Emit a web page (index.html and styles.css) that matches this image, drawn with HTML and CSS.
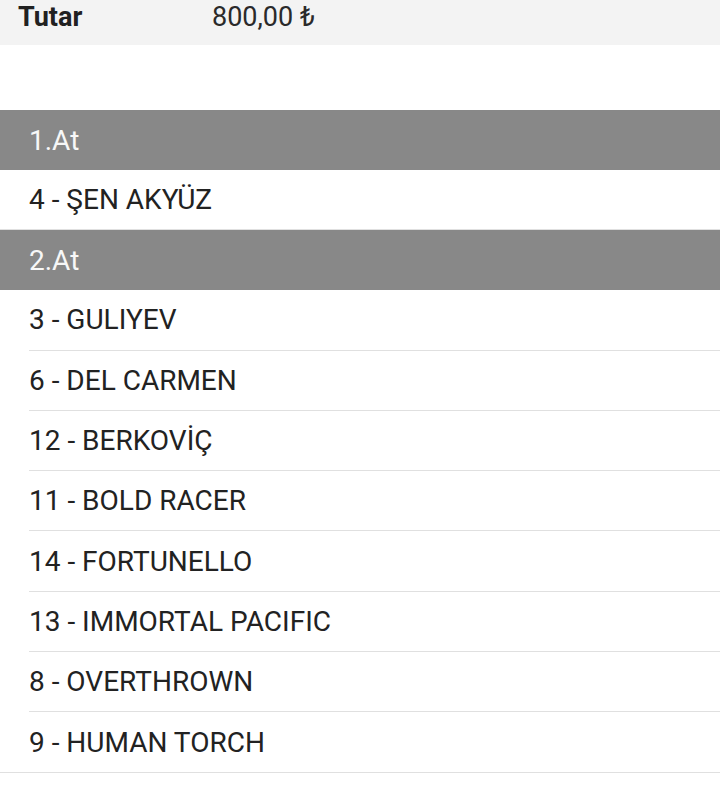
FILE: index.html
```html
<!DOCTYPE html>
<html lang="tr">
<head>
<meta charset="utf-8">
<link rel="stylesheet" href="styles.css">
</head>
<body>
<div class="summary">
  <span class="label">Tutar</span>
  <span class="value">800,00 ₺</span>
</div>
<div class="list">
  <div class="group-head">1.At</div>
  <div class="row last">4 - ŞEN AKYÜZ</div>
  <div class="group-head">2.At</div>
  <div class="row">3 - GULIYEV</div>
  <div class="row">6 - DEL CARMEN</div>
  <div class="row">12 - BERKOVİÇ</div>
  <div class="row">11 - BOLD RACER</div>
  <div class="row">14 - FORTUNELLO</div>
  <div class="row">13 - IMMORTAL PACIFIC</div>
  <div class="row">8 - OVERTHROWN</div>
  <div class="row last">9 - HUMAN TORCH</div>
</div>
</body>
</html>
```
FILE: styles.css
```css
html, body {
  margin: 0;
  padding: 0;
  background: #ffffff;
}
body {
  font-family: Roboto, "Noto Sans", sans-serif;
  color: #212121;
  width: 720px;
}
.summary {
  height: 45px;
  background: #f3f3f3;
  display: flex;
  align-items: flex-start;
  font-size: 27px;
  line-height: 34px;
}
.summary .label {
  font-weight: 700;
  width: 194px;
  padding-left: 18px;
}
.summary .value {
  color: #2a2a2a;
}
.list {
  margin-top: 65px;
}
.group-head {
  height: 60px;
  background: #888888;
  color: #f7f7f7;
  font-size: 28px;
  display: flex;
  align-items: center;
  padding-left: 29px;
}
.row {
  height: 60.3px;
  box-sizing: border-box;
  margin-left: 29px;
  border-bottom: 1px solid #e0e0e0;
  font-size: 28px;
  display: flex;
  align-items: center;
  color: #222222;
}
.row.last {
  margin-left: 0;
  padding-left: 29px;
}
```
